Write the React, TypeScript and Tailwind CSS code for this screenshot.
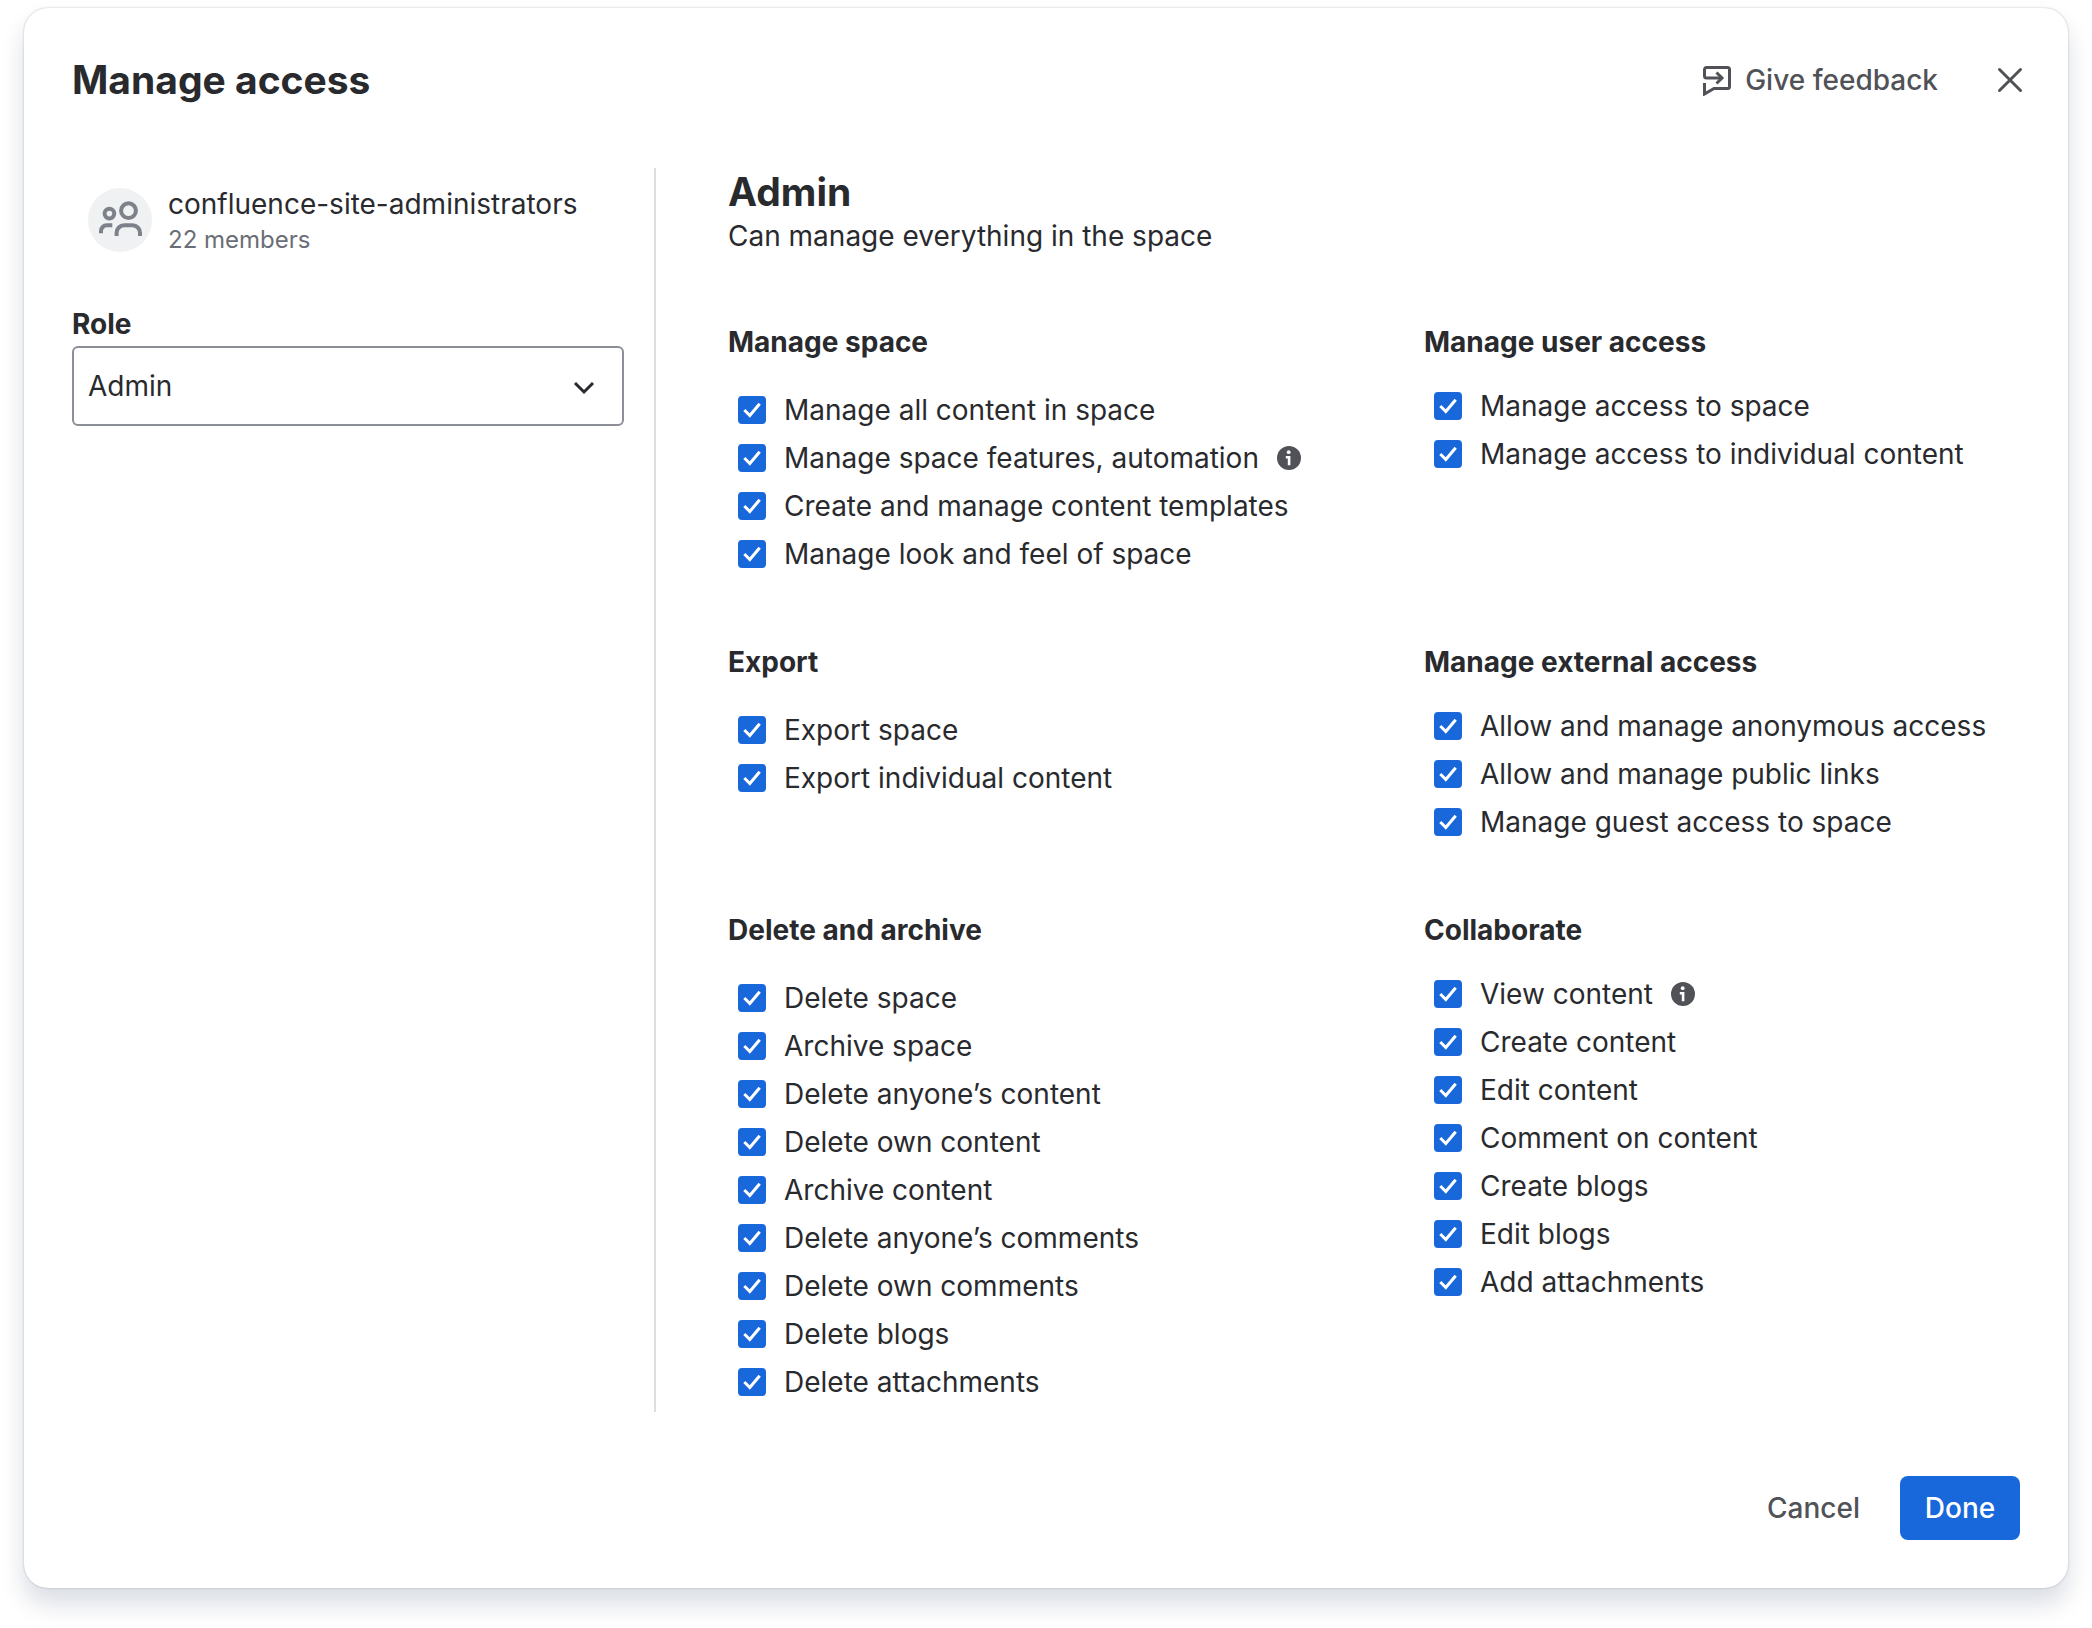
interface Permission {
  id: string;
  label: string;
  hasInfo?: boolean;
}

interface PermissionGroup {
  title: string;
  permissions: Permission[];
}

// Listed row by row: left column, right column
const groups: PermissionGroup[] = [
  {
    title: "Manage space",
    permissions: [
      { id: "manage-content", label: "Manage all content in space" },
      { id: "manage-features", label: "Manage space features, automation", hasInfo: true },
      { id: "manage-templates", label: "Create and manage content templates" },
      { id: "manage-look", label: "Manage look and feel of space" },
    ],
  },
  {
    title: "Manage user access",
    permissions: [
      { id: "access-space", label: "Manage access to space" },
      { id: "access-content", label: "Manage access to individual content" },
    ],
  },
  {
    title: "Export",
    permissions: [
      { id: "export-space", label: "Export space" },
      { id: "export-content", label: "Export individual content" },
    ],
  },
  {
    title: "Manage external access",
    permissions: [
      { id: "external-anonymous", label: "Allow and manage anonymous access" },
      { id: "external-links", label: "Allow and manage public links" },
      { id: "external-guests", label: "Manage guest access to space" },
    ],
  },
  {
    title: "Delete and archive",
    permissions: [
      { id: "delete-space", label: "Delete space" },
      { id: "archive-space", label: "Archive space" },
      { id: "delete-any-content", label: "Delete anyone’s content" },
      { id: "delete-own-content", label: "Delete own content" },
      { id: "archive-content", label: "Archive content" },
      { id: "delete-any-comments", label: "Delete anyone’s comments" },
      { id: "delete-own-comments", label: "Delete own comments" },
      { id: "delete-blogs", label: "Delete blogs" },
      { id: "delete-attachments", label: "Delete attachments" },
    ],
  },
  {
    title: "Collaborate",
    permissions: [
      { id: "view-content", label: "View content", hasInfo: true },
      { id: "create-content", label: "Create content" },
      { id: "edit-content", label: "Edit content" },
      { id: "comment-content", label: "Comment on content" },
      { id: "create-blogs", label: "Create blogs" },
      { id: "edit-blogs", label: "Edit blogs" },
      { id: "add-attachments", label: "Add attachments" },
    ],
  },
];

const FeedbackIcon = () => (
  <svg className="size-8" viewBox="0 0 32 32" fill="none" stroke="currentColor" strokeWidth="3">
    <path d="M21 14H5.5a2 2 0 0 1-2-2V5.5a2 2 0 0 1 2-2h21a2 2 0 0 1 2 2v17a2 2 0 0 1-2 2H13L3.5 30V19" />
    <path d="M15.500 8.500L21 14l-5.500 5.500" />
  </svg>
);

const CloseIcon = () => (
  <svg className="size-8" viewBox="0 0 32 32" fill="none" stroke="currentColor" strokeWidth="3" strokeLinecap="round">
    <path d="M5.500 5.500l21 21M26.500 5.500l-21 21" />
  </svg>
);

const PeopleIcon = () => (
  <svg className="size-16" viewBox="0 0 64 64" fill="none" stroke="currentColor" strokeWidth="4">
    <circle cx="40.500" cy="22.700" r="7.400" />
    <circle cx="21.400" cy="25.600" r="4.800" />
    <path d="M28.600 48v-3.200a7.500 7.500 0 0 1 7.500-7.500h8.400a7.500 7.500 0 0 1 7.500 7.500V48" />
    <path d="M13 45.300V43a5.700 5.700 0 0 1 5.700-5.700h5.600" />
  </svg>
);

const InfoIcon = () => (
  <svg className="size-6" viewBox="0 0 24 24" role="img" aria-label="More information">
    <circle cx="12" cy="12" r="12" fill="#505258" />
    <circle cx="11.700" cy="6.200" r="1.900" fill="#fff" />
    <path d="M8.800 11.300h3.300V19.300" stroke="#fff" strokeWidth="2.600" fill="none" />
  </svg>
);

const Checkbox = ({ permission }: { permission: Permission }) => (
  <li className="flex h-12 items-center pl-[10px]">
    <span className="relative flex size-7 shrink-0">
      <input
        id={permission.id}
        type="checkbox"
        defaultChecked
        className="peer size-7 appearance-none rounded-[4px] border-2 border-[#8c8f97] checked:border-[#1868db] checked:bg-[#1868db]"
      />
      <svg
        className="pointer-events-none absolute inset-0 hidden size-7 peer-checked:block"
        viewBox="0 0 28 28"
        fill="none"
        stroke="#fff"
        strokeWidth="3"
      >
        <path d="M6.300 14l5.500 5.500L21.700 7.700" />
      </svg>
    </span>
    <label htmlFor={permission.id} className="pl-[18px]">
      {permission.label}
    </label>
    {permission.hasInfo && (
      <span className="pl-[18px]">
        <InfoIcon />
      </span>
    )}
  </li>
);

const Group = ({ group }: { group: PermissionGroup }) => (
  <section className="group">
    <h3 className="font-[653]">{group.title}</h3>
    <ul className="mt-5 group-odd:mt-6">
      {group.permissions.map((permission) => (
        <Checkbox key={permission.id} permission={permission} />
      ))}
    </ul>
  </section>
);

const App = () => {
  return (
    <div className="bg-white px-6 pt-2 pb-10 font-['Inter',sans-serif] text-[28px] leading-10 text-[#292a2e]">
      <main className="rounded-[24px] bg-white p-12 shadow-[0_16px_24px_#091e4226,0_0_2px_#091e424f]">
        <header className="flex items-center justify-between">
          <h1 className="text-[39px] leading-12 font-[653]">Manage access</h1>
          <div className="-mr-1.5 flex items-center gap-14 font-medium text-[#505258]">
            <button type="button" className="flex items-center gap-3">
              <FeedbackIcon />
              Give feedback
            </button>
            <button type="button" aria-label="Close">
              <CloseIcon />
            </button>
          </div>
        </header>

        <div className="mt-16 flex">
          <aside className="w-[584px] shrink-0 border-r-2 border-[#dddee1] pr-[30px]">
            <div className="flex items-center gap-4 pt-4 pl-4">
              <span className="rounded-full bg-[#f0f1f2] text-[#7d818a]">
                <PeopleIcon />
              </span>
              <div>
                <p>confluence-site-administrators</p>
                <p className="text-[24px] leading-8 text-[#6b6e76]">22 members</p>
              </div>
            </div>
            <label htmlFor="role" className="mt-12 block font-[653]">
              Role
            </label>
            <div className="relative mt-0.5">
              <select
                id="role"
                defaultValue="admin"
                className="h-20 w-full appearance-none rounded-[6px] border-2 border-[#8c8f97] bg-white px-[14px]"
              >
                <option value="admin">Admin</option>
              </select>
              <svg
                className="pointer-events-none absolute top-6 right-6 size-8"
                viewBox="0 0 32 32"
                fill="none"
                stroke="currentColor"
                strokeWidth="3"
              >
                <path d="M7 13l9 9 9-9" />
              </svg>
            </div>
          </aside>

          <div className="grow pl-18">
            <h2 className="text-[39px] leading-12 font-[653]">Admin</h2>
            <p>Can manage everything in the space</p>
            <div className="mt-[66px] grid grid-cols-2 gap-x-[100px] gap-y-16 pb-1.5 whitespace-nowrap">
              {groups.map((group) => (
                <Group key={group.title} group={group} />
              ))}
            </div>
          </div>
        </div>

        <footer className="mt-16 flex justify-end gap-4 font-medium">
          <button type="button" className="h-16 px-6 text-[#505258]">
            Cancel
          </button>
          <button type="button" className="h-16 min-w-30 rounded-[8px] bg-[#1868db] px-6 text-white">
            Done
          </button>
        </footer>
      </main>
    </div>
  );
};

export default App;
